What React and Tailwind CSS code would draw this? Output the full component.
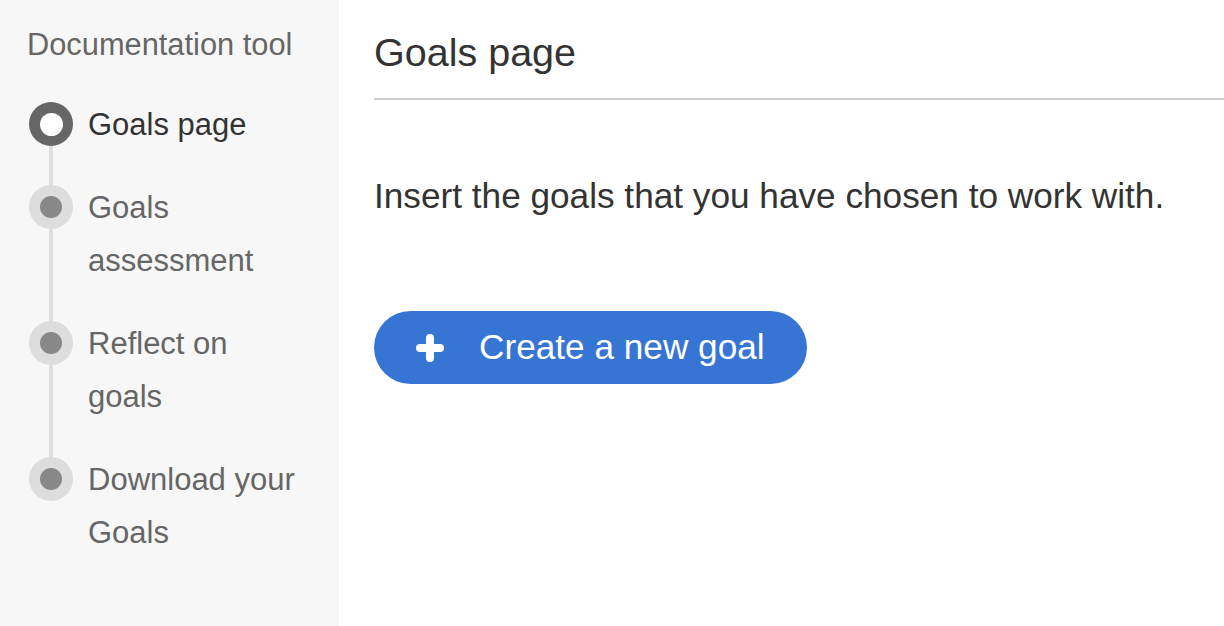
import React from "react";

const steps = [
  { label: "Goals page", active: true },
  { label: ["Goals", "assessment"] },
  { label: ["Reflect on", "goals"] },
  { label: ["Download your", "Goals"] },
];

const Step = ({ step, first, last }) => {
  const lines = Array.isArray(step.label) ? step.label : [step.label];
  return (
    <div className="flex gap-[15px]">
      <div className="flex w-[44px] shrink-0 flex-col items-center">
        <div className={`h-[4px] w-[4px] ${first ? "" : "bg-[#dddddd]"}`}></div>
        {step.active ? (
          <div className="flex h-[44px] w-[44px] items-center justify-center rounded-full bg-[#666666]">
            <div className="h-[23px] w-[23px] rounded-full bg-white"></div>
          </div>
        ) : (
          <div className="flex h-[44px] w-[44px] items-center justify-center rounded-full bg-[#dddddd]">
            <div className="h-[22px] w-[22px] rounded-full bg-[#888888]"></div>
          </div>
        )}
        {!last && <div className="w-[4px] flex-1 bg-[#dddddd]"></div>}
      </div>
      <div
        className={`pb-[30px] text-[31px] leading-[53px] ${
          step.active ? "text-[#333333]" : "text-[#666666]"
        }`}
      >
        {lines.map((l) => (
          <div key={l}>{l}</div>
        ))}
      </div>
    </div>
  );
};

const App = () => {
  return (
    <div
      className="flex h-[626px] w-full overflow-hidden bg-white"
      style={{ fontFamily: '"Liberation Sans", Arial, sans-serif' }}
    >
      <aside className="w-[339px] shrink-0 bg-[#f7f7f7] pl-[26px] pt-[27px]">
        <p className="pl-[1px] text-[30.8px] leading-[35px] text-[#666666]">Documentation tool</p>
        <div className="mt-[36px] pl-[3px]">
          {steps.map((s, i) => (
            <Step key={i} step={s} first={i === 0} last={i === steps.length - 1} />
          ))}
        </div>
      </aside>

      <main className="flex-1 pl-[35px] pt-[30px]">
        <h1 className="border-b-2 border-[#cccccc] pb-[23px] text-[39.5px] font-normal leading-[45px] text-[#333333]">
          Goals page
        </h1>
        <p className="mt-[76px] text-[35.2px] leading-[40px] text-[#333333]">
          Insert the goals that you have chosen to work with.
        </p>
        <button className="mt-[95px] flex h-[73px] items-center gap-[35px] rounded-full bg-[#3675d4] px-[42px] text-[35.2px] text-white">
          <svg width="28" height="28" viewBox="0 0 28 28" fill="none">
            <path
              d="M14 4v20M4 14h20"
              stroke="white"
              strokeWidth="8"
              strokeLinecap="round"
            />
          </svg>
          <span>Create a new goal</span>
        </button>
      </main>
    </div>
  );
};

export default App;
